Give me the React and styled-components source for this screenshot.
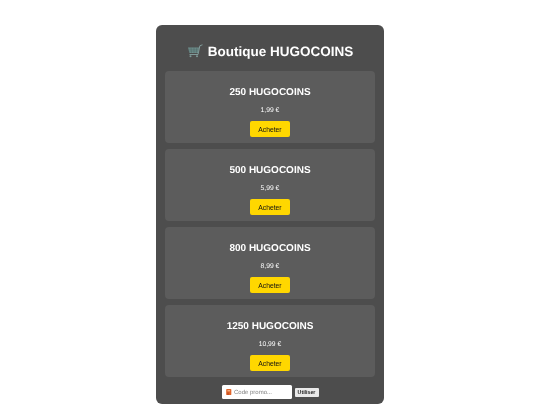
import React from 'react'
import styled, { createGlobalStyle } from 'styled-components'

const GlobalStyle = createGlobalStyle`
  html, body {
    margin: 0;
    padding: 0;
    background: #fff;
    font-family: "Liberation Sans", Arial, sans-serif;
    text-rendering: geometricPrecision;
  }
`

const Page = styled.div`
  display: flex;
  justify-content: center;
  padding-top: 25px;
  height: 380px;
  overflow: hidden;
`

const Shop = styled.div`
  width: 228px;
  height: 379px;
  box-sizing: border-box;
  padding: 0 9px;
  background: #4d4d4d;
  border-radius: 6px;
  color: #fff;
  will-change: transform;
`

const Title = styled.h1`
  display: flex;
  align-items: center;
  justify-content: center;
  gap: 5px;
  height: 46px;
  box-sizing: border-box;
  padding-top: 6px;
  margin: 0;
  font-size: 13.5px;
  font-weight: 700;
`

const Offers = styled.div`
  display: flex;
  flex-direction: column;
  gap: 6px;
`

const Offer = styled.div`
  display: flex;
  flex-direction: column;
  align-items: center;
  height: 72px;
  box-sizing: border-box;
  padding-top: 15px;
  background: #5c5c5c;
  border-radius: 4px;
`

const OfferName = styled.div`
  font-size: 10px;
  font-weight: 700;
  line-height: 13px;
`

const Price = styled.div`
  margin-top: 8px;
  font-size: 6.75px;
  line-height: 8px;
`

const BuyButton = styled.button`
  width: 40px;
  height: 16px;
  margin-top: 6px;
  padding: 0;
  border: none;
  border-radius: 2px;
  background: #ffd700;
  color: #111;
  font-family: inherit;
  font-size: 6.75px;
`

const PromoRow = styled.div`
  display: flex;
  align-items: center;
  justify-content: center;
  gap: 3px;
  margin-top: 8px;
`

const PromoField = styled.div`
  display: flex;
  align-items: center;
  gap: 2.5px;
  width: 70px;
  height: 14px;
  box-sizing: border-box;
  padding-left: 4.5px;
  background: #fff;
  border-radius: 1.5px;
  color: #808080;
  font-size: 6px;
`

const PromoHint = styled.span`
  line-height: 9px;
  padding-top: 2px;
`

const UseButton = styled.button`
  width: 24px;
  height: 9px;
  padding: 0;
  border: none;
  border-radius: 1px;
  background: #e9e9e9;
  color: #222;
  font-family: inherit;
  font-size: 5.25px;
  font-weight: 700;
`

const offers = [
  { name: '250 HUGOCOINS', price: '1,99 €' },
  { name: '500 HUGOCOINS', price: '5,99 €' },
  { name: '800 HUGOCOINS', price: '8,99 €' },
  { name: '1250 HUGOCOINS', price: '10,99 €' },
]

function CartIcon() {
  return (
    <svg width="16" height="14" viewBox="0 0 16 14" fill="none">
      <path d="M1 3.5h11l-1 5.5H2.5z" fill="#6f8f8d" />
      <path d="M1 5.2h10.5M1.5 7h9.5M4 3.5l.4 5.5M7 3.5v5.5M9.8 3.5l-.5 5.5" stroke="#4f6463" strokeWidth=".5" />
      <path d="M15.5 .8l-2.6.9L11 10.5H2.5" stroke="#86a3a1" strokeWidth=".9" />
      <circle cx="3.5" cy="12.3" r="1" fill="#7d9896" />
      <circle cx="10" cy="12.3" r="1" fill="#7d9896" />
    </svg>
  )
}

function TicketIcon() {
  return (
    <svg width="5.5" height="6" viewBox="0 0 6 7">
      <rect width="6" height="7" rx="1" fill="#e0662c" />
      <rect x="1.5" y="1.2" width="3" height="1.6" fill="#f4b183" />
      <rect x="1.5" y="4" width="1.2" height="3" fill="#b8441e" />
    </svg>
  )
}

export default function App() {
  return (
    <Page>
      <GlobalStyle />
      <Shop>
        <Title>
          <CartIcon />
          Boutique HUGOCOINS
        </Title>
        <Offers>
          {offers.map(offer => (
            <Offer key={offer.name}>
              <OfferName>{offer.name}</OfferName>
              <Price>{offer.price}</Price>
              <BuyButton>Acheter</BuyButton>
            </Offer>
          ))}
        </Offers>
        <PromoRow>
          <PromoField>
            <TicketIcon />
            <PromoHint>Code promo...</PromoHint>
          </PromoField>
          <UseButton>Utiliser</UseButton>
        </PromoRow>
      </Shop>
    </Page>
  )
}
